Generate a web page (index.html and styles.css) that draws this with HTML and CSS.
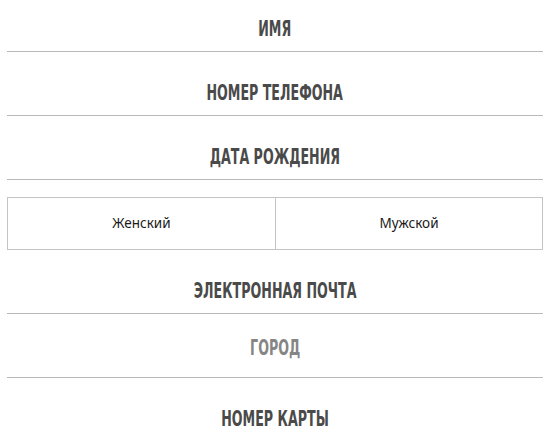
FILE: index.html
```html
<!DOCTYPE html>
<html lang="ru">
<head>
  <meta charset="UTF-8" />
  <meta name="viewport" content="width=device-width, initial-scale=1.0" />
  <title>Регистрация</title>
  <link rel="stylesheet" href="styles.css">
</head>
<body>
  <form class="signup">
    <div class="field"><span class="label">Имя</span></div>
    <div class="field"><span class="label">Номер телефона</span></div>
    <div class="field"><span class="label">Дата рождения</span></div>

    <!-- Gender switch -->
    <div class="gender">
      <div class="gender-option">Женский</div>
      <div class="gender-option">Мужской</div>
    </div>

    <div class="field"><span class="label">Электронная почта</span></div>
    <div class="field field-select"><span class="label">Город</span></div>
    <div class="field"><span class="label">Номер карты</span></div>
  </form>
</body>
</html>
```

FILE: styles.css
```css
/* Base styling */
body {
  margin: 0;
  padding: 0;
  background: #fff;
  color: #4a4a4a;
  font-family: "DejaVu Sans", sans-serif;
}
.signup {
  margin-top: -12px;
  padding: 0 7px;
}
/* Text rows */
.field {
  height: 24px;
  padding: 29px 0 10px;
  line-height: 24px;
  text-align: center;
  border-bottom: 1px solid #b8b8b8;
}
.label {
  display: inline-block;
  vertical-align: top;
  line-height: 24px;
  font-size: 22px;
  font-weight: bold;
  font-stretch: condensed;
  text-transform: uppercase;
  transform: scaleX(0.64);
}
.field-select {
  padding: 22px 0 17px;
  color: #858585;
}
/* Gender switch */
.gender {
  display: grid;
  grid-template-columns: 1fr 1fr;
  margin-top: 17px;
  border: 1px solid #c4c4c4;
}
.gender-option {
  height: 51px;
  line-height: 51px;
  text-align: center;
  font-family: "Noto Sans", sans-serif;
  font-size: 13.5px;
  color: #1a1a1a;
}
.gender-option + .gender-option {
  border-left: 1px solid #c4c4c4;
}
```
